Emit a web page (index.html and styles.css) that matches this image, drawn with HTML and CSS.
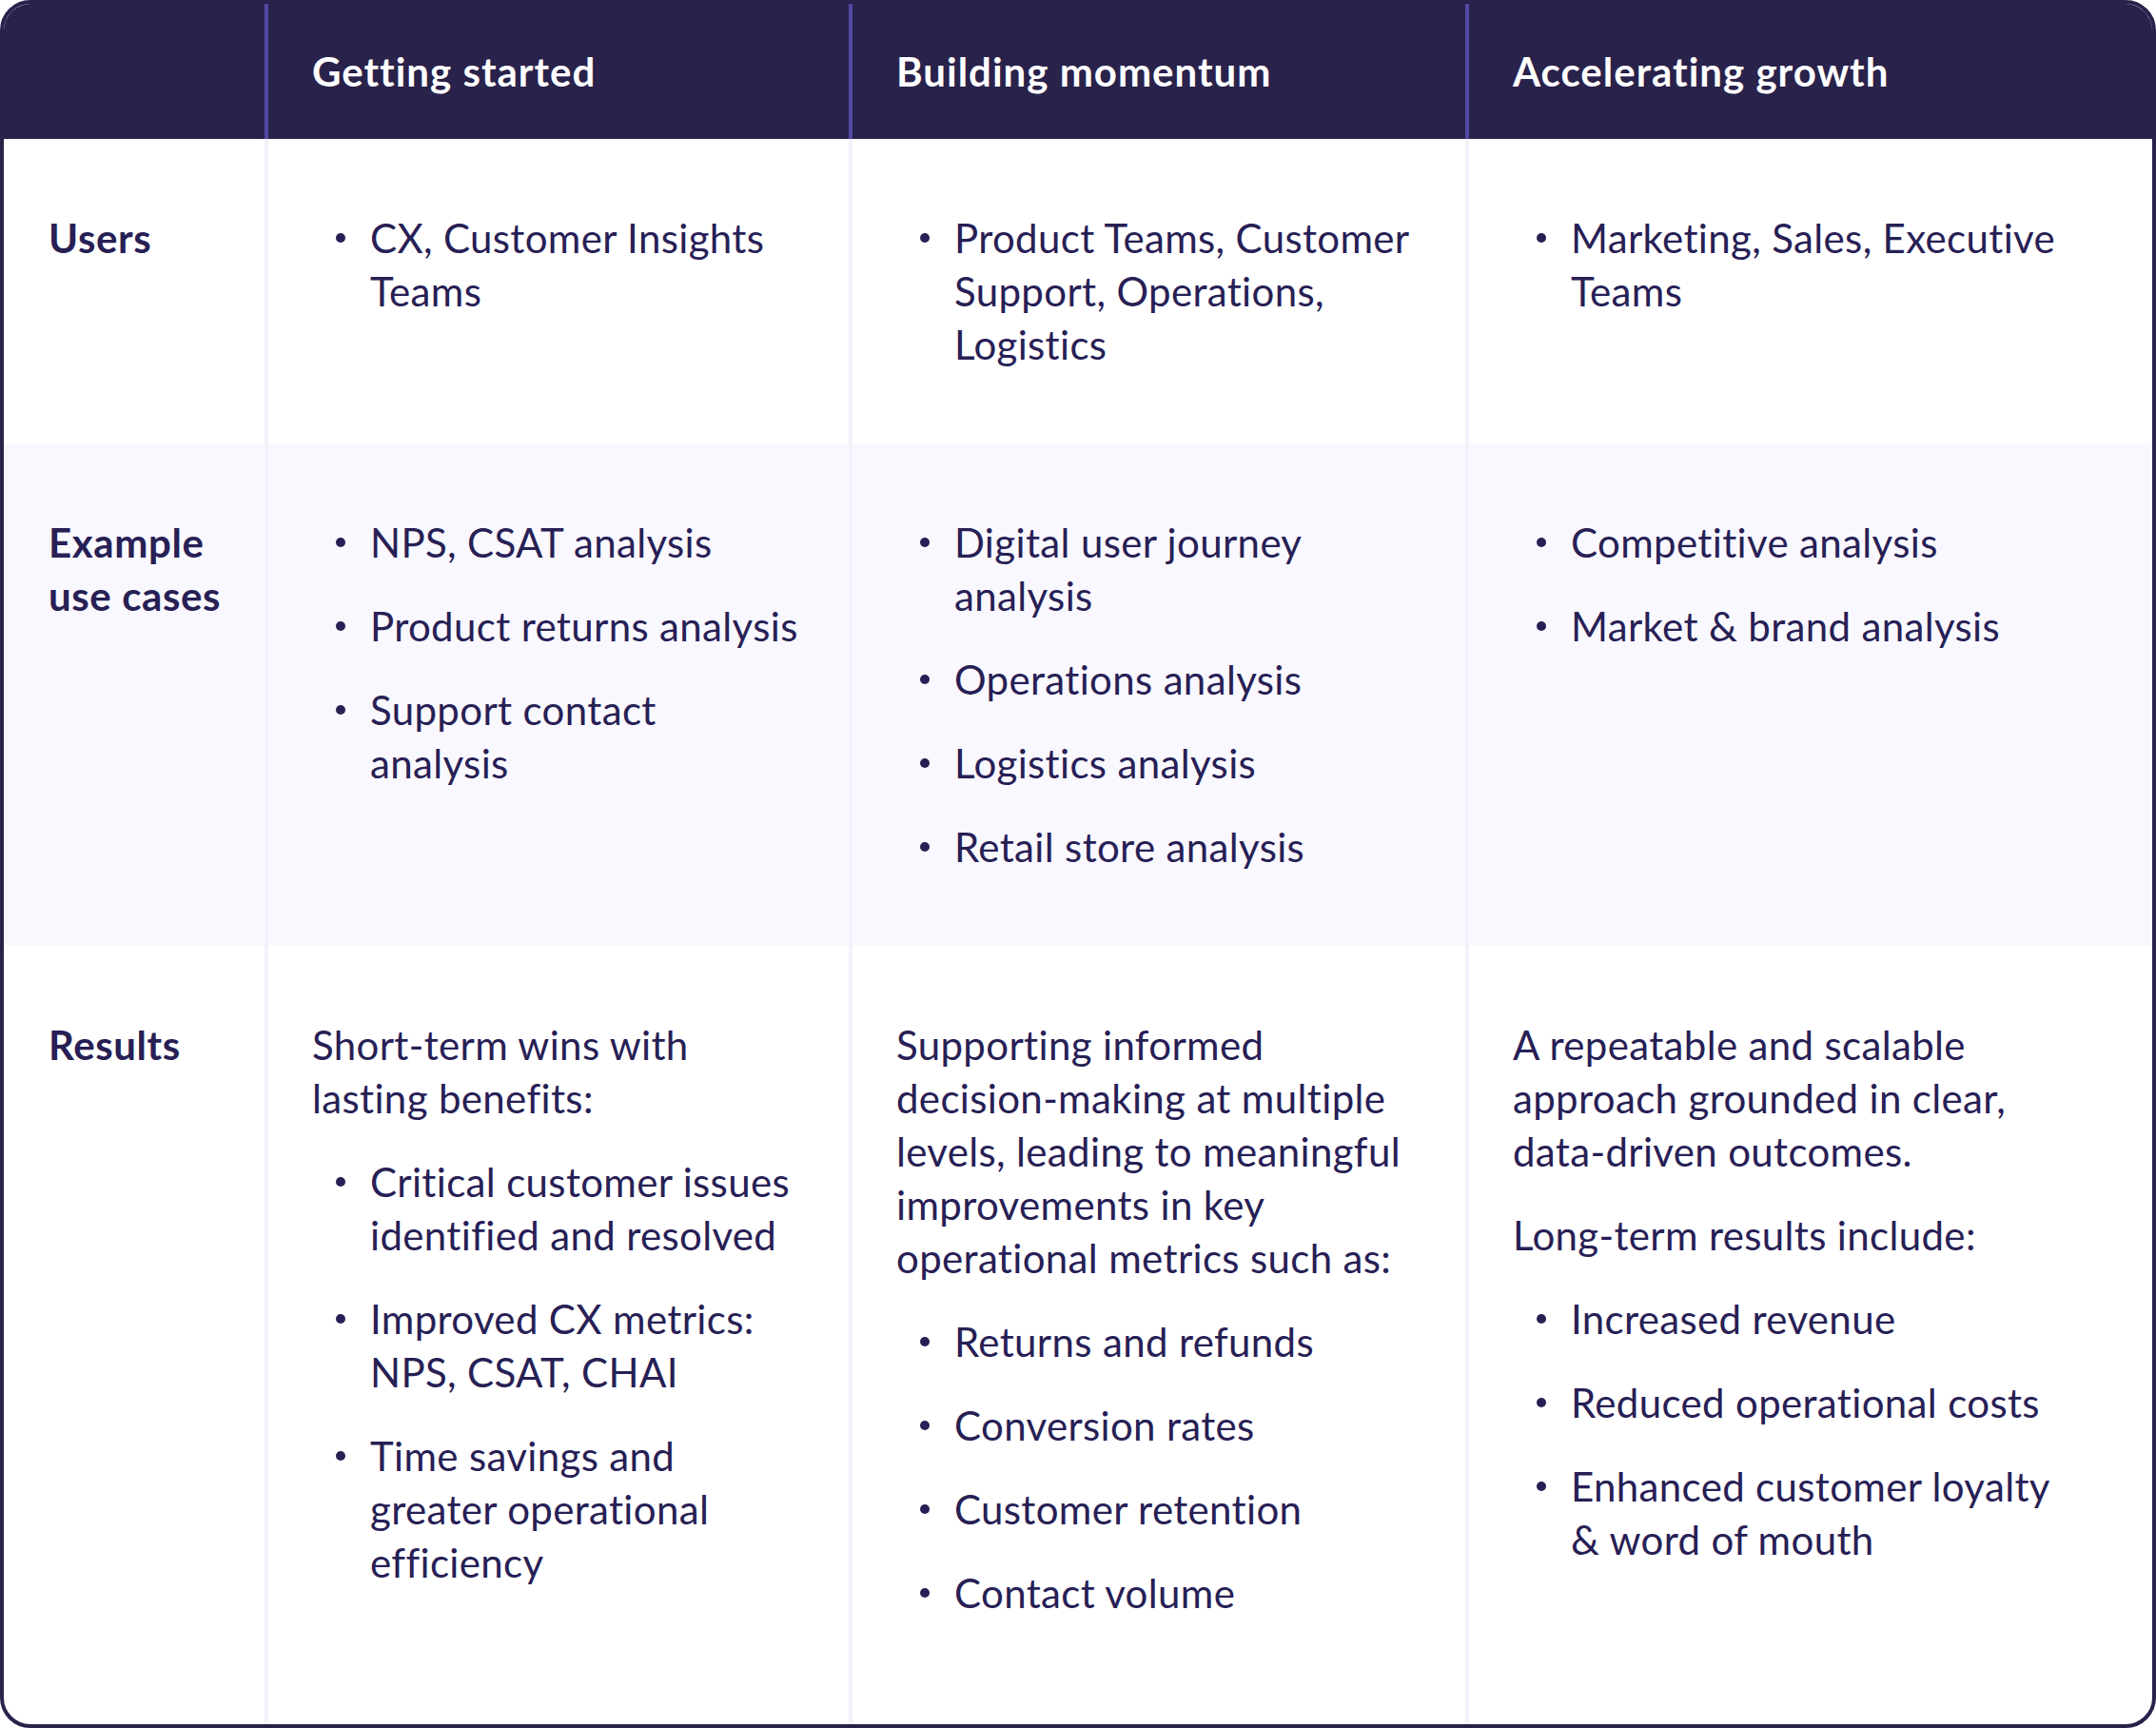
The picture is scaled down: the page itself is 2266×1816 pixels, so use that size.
FILE: index.html
```html
<!DOCTYPE html>
<html lang="en">
<head>
<meta charset="utf-8">
<title>Stages</title>
<link rel="stylesheet" href="styles.css">
</head>
<body>
<div class="table">
  <div class="cell head"></div>
  <div class="cell head col">Getting started</div>
  <div class="cell head col">Building momentum</div>
  <div class="cell head col">Accelerating growth</div>

  <div class="cell label">Users</div>
  <div class="cell col"><ul class="list"><li>CX, Customer Insights<br>Teams</li></ul></div>
  <div class="cell col"><ul class="list"><li>Product Teams, Customer<br>Support, Operations,<br>Logistics</li></ul></div>
  <div class="cell col"><ul class="list"><li>Marketing, Sales, Executive<br>Teams</li></ul></div>

  <div class="cell label alt">Example<br>use cases</div>
  <div class="cell col alt"><ul class="list">
    <li>NPS, CSAT analysis</li>
    <li>Product returns analysis</li>
    <li>Support contact<br>analysis</li>
  </ul></div>
  <div class="cell col alt"><ul class="list">
    <li>Digital user journey<br>analysis</li>
    <li>Operations analysis</li>
    <li>Logistics analysis</li>
    <li>Retail store analysis</li>
  </ul></div>
  <div class="cell col alt"><ul class="list">
    <li>Competitive analysis</li>
    <li>Market &amp; brand analysis</li>
  </ul></div>

  <div class="cell label last">Results</div>
  <div class="cell col last">
    <p class="para">Short-term wins with<br>lasting benefits:</p>
    <ul class="list">
      <li>Critical customer issues<br>identified and resolved</li>
      <li>Improved CX metrics:<br>NPS, CSAT, CHAI</li>
      <li>Time savings and<br>greater operational<br>efficiency</li>
    </ul>
  </div>
  <div class="cell col last">
    <p class="para">Supporting informed<br>decision-making at multiple<br>levels, leading to meaningful<br>improvements in key<br>operational metrics such as:</p>
    <ul class="list">
      <li>Returns and refunds</li>
      <li>Conversion rates</li>
      <li>Customer retention</li>
      <li>Contact volume</li>
    </ul>
  </div>
  <div class="cell col last">
    <p class="para">A repeatable and scalable<br>approach grounded in clear,<br>data-driven outcomes.</p>
    <p class="para">Long-term results include:</p>
    <ul class="list">
      <li>Increased revenue</li>
      <li>Reduced operational costs</li>
      <li>Enhanced customer loyalty<br>&amp; word of mouth</li>
    </ul>
  </div>
</div>
</body>
</html>
```
FILE: styles.css
```css
* { box-sizing: border-box; }
html, body { margin: 0; padding: 0; background: #ffffff; }
body {
  font-family: "Lato", "Liberation Sans", sans-serif;
  color: #272055;
}
.table {
  width: 2266px;
  height: 1816px;
  border: 4px solid #29224b;
  border-radius: 32px;
  overflow: hidden;
  display: grid;
  grid-template-columns: 274px 614px 648px 1fr;
  grid-template-rows: 142px auto auto 1fr;
  background: #ffffff;
}
.cell {
  font-size: 42px;
  line-height: 56px;
  letter-spacing: 0.35px;
  padding: 76px 30px 76px 46px;
  white-space: nowrap;
}
.col { border-left: 4px solid #f3f1fb; }
.head {
  background: #29224b;
  color: #ffffff;
  font-weight: 700;
  letter-spacing: 1px;
  padding: 0 30px 0 46px;
  display: flex;
  align-items: center;
}
.head.col { border-left-color: #5149a3; }
.label { font-weight: 700; padding-left: 47px; letter-spacing: 0.6px; }
.alt { background: #f9f8fe; }
.last { padding-bottom: 40px; }
.para { margin: 0 0 32px 0; }
.list {
  list-style: none;
  margin: 0;
  padding: 0 0 0 61px;
}
.list li { position: relative; margin: 0 0 32px 0; }
.list li:last-child { margin-bottom: 0; }
.list li::before {
  content: "";
  position: absolute;
  left: -36px;
  top: 23px;
  width: 10px;
  height: 10px;
  border-radius: 50%;
  background: #272055;
}
```
